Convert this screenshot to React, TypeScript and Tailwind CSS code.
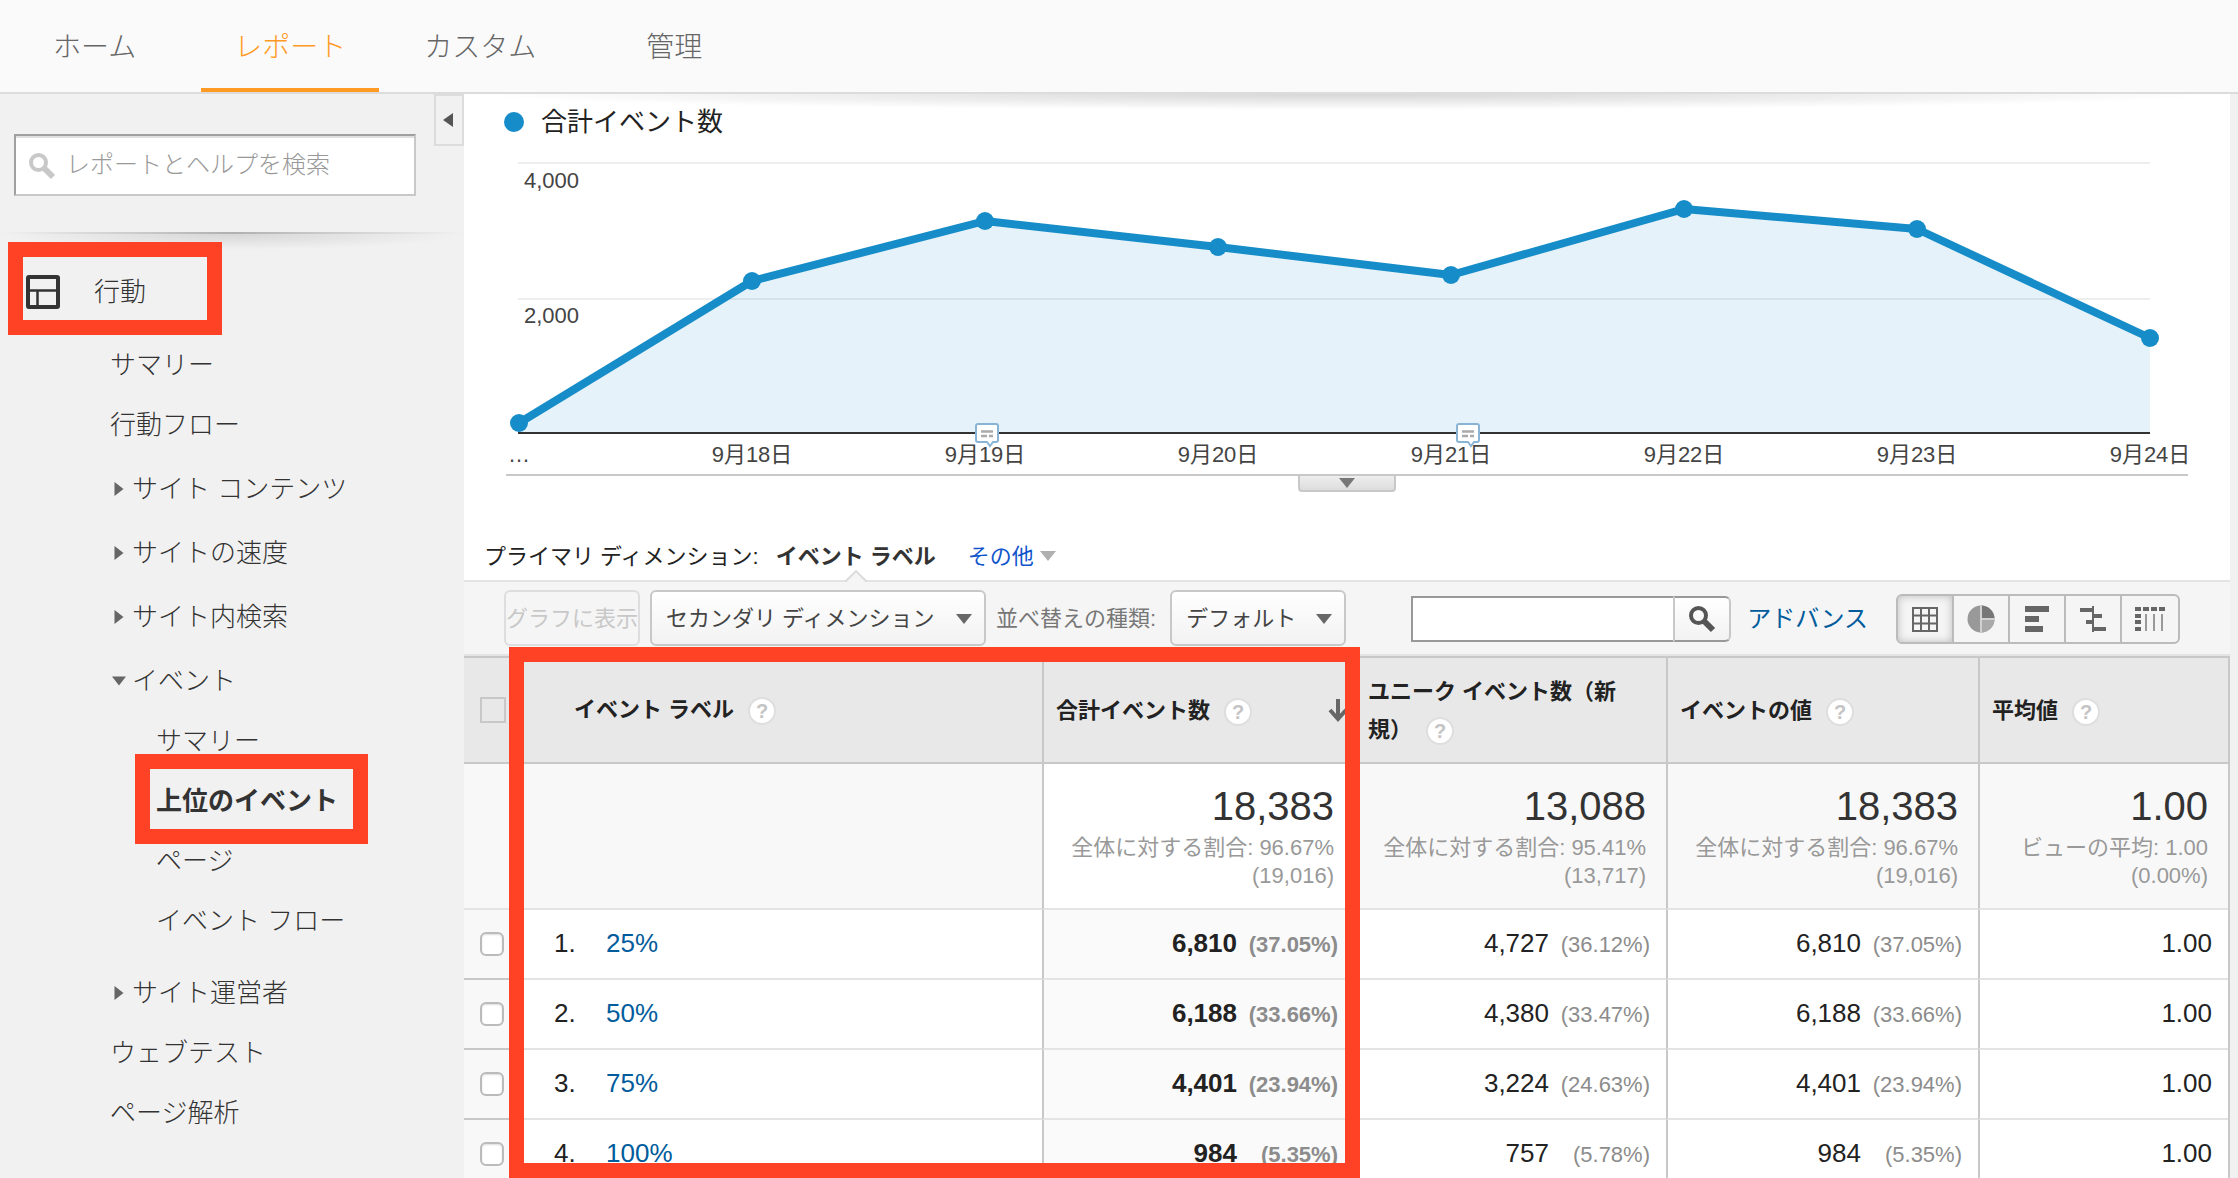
import { useState } from "react";
import clsx from "clsx";

type MenuEntry = {
  label: string;
  kind: "leaf" | "group";
  open?: boolean;
  children?: { label: string; active?: boolean }[];
};

type Metric = { value: string; percent?: string };

const tabs = [
  { label: "ホーム", className: "ml-5" },
  { label: "レポート", className: "ml-8", active: true },
  { label: "カスタム", className: "ml-3" },
  { label: "管理", className: "ml-11" },
];

const menu: MenuEntry[] = [
  { label: "サマリー", kind: "leaf" },
  { label: "行動フロー", kind: "leaf" },
  { label: "サイト コンテンツ", kind: "group" },
  { label: "サイトの速度", kind: "group" },
  { label: "サイト内検索", kind: "group" },
  {
    label: "イベント",
    kind: "group",
    open: true,
    children: [
      { label: "サマリー" },
      { label: "上位のイベント", active: true },
      { label: "ページ" },
      { label: "イベント フロー" },
    ],
  },
  { label: "サイト運営者", kind: "group" },
  { label: "ウェブテスト", kind: "leaf" },
  { label: "ページ解析", kind: "leaf" },
];

const points = [
  { x: 55, y: 273, label: "…" },
  { x: 288, y: 131, label: "9月18日" },
  { x: 521, y: 71, label: "9月19日" },
  { x: 754, y: 97, label: "9月20日" },
  { x: 987, y: 125, label: "9月21日" },
  { x: 1220, y: 59, label: "9月22日" },
  { x: 1453, y: 79, label: "9月23日" },
  { x: 1686, y: 188, label: "9月24日" },
];

const columns = [
  { label: "合計イベント数", sorted: true },
  { label: "ユニーク イベント数（新規）" },
  { label: "イベントの値" },
  { label: "平均値" },
];

const totals = [
  { value: "18,383", note: "全体に対する割合: 96.67%", base: "(19,016)" },
  { value: "13,088", note: "全体に対する割合: 95.41%", base: "(13,717)" },
  { value: "18,383", note: "全体に対する割合: 96.67%", base: "(19,016)" },
  { value: "1.00", note: "ビューの平均: 1.00", base: "(0.00%)" },
];

const rows: { label: string; metrics: Metric[] }[] = [
  {
    label: "25%",
    metrics: [
      { value: "6,810", percent: "(37.05%)" },
      { value: "4,727", percent: "(36.12%)" },
      { value: "6,810", percent: "(37.05%)" },
      { value: "1.00" },
    ],
  },
  {
    label: "50%",
    metrics: [
      { value: "6,188", percent: "(33.66%)" },
      { value: "4,380", percent: "(33.47%)" },
      { value: "6,188", percent: "(33.66%)" },
      { value: "1.00" },
    ],
  },
  {
    label: "75%",
    metrics: [
      { value: "4,401", percent: "(23.94%)" },
      { value: "3,224", percent: "(24.63%)" },
      { value: "4,401", percent: "(23.94%)" },
      { value: "1.00" },
    ],
  },
  {
    label: "100%",
    metrics: [
      { value: "984", percent: "(5.35%)" },
      { value: "757", percent: "(5.78%)" },
      { value: "984", percent: "(5.35%)" },
      { value: "1.00" },
    ],
  },
];

const Triangle = ({ className }: { className?: string }) => (
  <svg viewBox="0 0 16 10" className={clsx("w-4 h-2.5 fill-current", className)} aria-hidden="true">
    <path d="M0 0h16L8 10z" />
  </svg>
);

const Magnifier = ({ className }: { className?: string }) => (
  <svg viewBox="0 0 28 28" className={clsx("w-7 h-7", className)} fill="none" stroke="currentColor" aria-hidden="true">
    <circle cx="10.5" cy="10.5" r="7.5" strokeWidth={4} />
    <path d="M16 16l9 9" strokeWidth={6} />
  </svg>
);

const HelpIcon = ({ className }: { className?: string }) => (
  <span
    className={clsx(
      "inline-flex items-center justify-center w-7 h-7 rounded-full bg-white border-2 border-[#dedede] text-[20px] leading-none font-bold text-[#c4c4c4] align-middle",
      className,
    )}
  >
    ?
  </span>
);

const Header = () => (
  <header className="bg-[#fafafa] border-b-2 border-[#dcdcdc]">
    <nav className="flex h-[92px]">
      {tabs.map((tab) => (
        <a
          key={tab.label}
          href="#"
          className={clsx(
            "flex items-center px-[33px] pt-2 border-b-4 text-[28px] font-light",
            tab.active ? "border-[#ff9a25] text-[#ff9a25]" : "border-transparent text-[#666]",
            tab.className,
          )}
        >
          {tab.label}
        </a>
      ))}
    </nav>
  </header>
);

const Sidebar = () => (
  <aside className="w-[464px] shrink-0 text-[26px] font-light text-[#333]">
    <div className="flex items-start justify-between h-[138px]">
      <label className="relative mt-10 ml-3.5 block">
        <Magnifier className="absolute left-3.5 top-[18px] text-[#c8c8c8]" />
        <input
          type="text"
          aria-label="レポートとヘルプを検索"
          placeholder="レポートとヘルプを検索"
          className="w-[402px] h-[62px] pl-[50px] bg-white border-2 border-t-[#a0a0a0] border-l-[#a0a0a0] border-r-[#c8c8c8] border-b-[#c8c8c8] text-[24px] placeholder:text-[#999] shadow-[inset_0_2px_0_#e0e0e0]"
        />
      </label>
      <button
        aria-label="メニューを閉じる"
        className="flex items-center justify-center w-[30px] h-[52px] pr-0.5 border-2 border-[#dcdcdc] text-[#555]"
      >
        <svg viewBox="0 0 10 14" className="w-2.5 h-3.5 fill-current" aria-hidden="true">
          <path d="M10 0v14L0 7z" />
        </svg>
      </button>
    </div>
    <div className="h-0.5 bg-[linear-gradient(to_right,#f1f1f1,#b0b0b0_50%,#f1f1f1)]" />
    <div className="h-4 bg-[radial-gradient(ellipse_at_top,rgba(0,0,0,0.11),transparent_70%)]" />

    <a href="#" className="relative flex items-center h-[84px] pl-[26px]">
      <span className="absolute left-2 -top-2 w-[214px] h-[93px] border-[15px] border-[#ff4126]" />
      <svg viewBox="0 0 34 34" className="w-[34px] h-[34px]" fill="none" stroke="#333" aria-hidden="true">
        <rect x="2" y="2" width="30" height="30" rx="1" strokeWidth={4} />
        <path d="M3 15.500h28M11.500 16v15" strokeWidth={2.500} />
      </svg>
      <span className="ml-[34px]">行動</span>
    </a>

    <ul className="pt-px">
      {menu.map((entry) => (
        <li key={entry.label}>
          <a
            href="#"
            className={clsx(
              "flex items-center pl-[110px]",
              entry.kind === "group" ? "h-16 pt-1" : "h-[60px]",
            )}
          >
            {entry.kind === "group" && (
              <span className="flex justify-center w-[22px] pr-1 text-[#666]">
                {entry.open ? (
                  <svg viewBox="0 0 14 9" className="w-3.5 h-2.5 fill-current" aria-hidden="true">
                    <path d="M0 0h14L7 9z" />
                  </svg>
                ) : (
                  <svg viewBox="0 0 9 14" className="w-2.5 h-3.5 fill-current" aria-hidden="true">
                    <path d="M0 0v14l9-7z" />
                  </svg>
                )}
              </span>
            )}
            {entry.label}
          </a>
          {entry.children && (
            <ul className="pb-2">
              {entry.children.map((child) => (
                <li key={child.label} className="relative">
                  <a
                    href="#"
                    className={clsx(
                      "flex items-center h-[60px] pl-[156px]",
                      child.active && "font-bold",
                    )}
                  >
                    {child.label}
                  </a>
                  {child.active && (
                    <span className="absolute left-[135px] -top-[17px] w-[233px] h-[90px] border-[15px] border-[#ff4126]" />
                  )}
                </li>
              ))}
            </ul>
          )}
        </li>
      ))}
    </ul>
  </aside>
);

const Note = ({ x, y }: { x: number; y: number }) => (
  <g transform={`translate(${x} ${y})`}>
    <path
      d="M3 1h18q2 0 2 2v14q0 2-2 2h-3l-3 4-3-4H3q-2 0-2-2V3q0-2 2-2z"
      fill="#fff"
      stroke="#8ab4d6"
      strokeWidth={2}
    />
    <path d="M6 8.500h12M6 13h6M14 13h4" stroke="#aaa" strokeWidth={2.500} />
  </g>
);

const Chart = () => {
  const line = points.map((p) => `${p.x},${p.y}`).join(" ");

  return (
    <svg viewBox="0 0 1766 324" className="block w-full h-auto" role="img" aria-label="合計イベント数">
      <g stroke="#eee" strokeWidth={2}>
        <path d="M54 13h1632M54 149h1632" />
      </g>
      <polygon points={`55,283 ${line} 1686,283`} fill="#168dc8" fillOpacity={0.11} />
      <path d="M54 283h1632" stroke="#333" strokeWidth={2} />
      <polyline points={line} fill="none" stroke="#168dc8" strokeWidth={8} strokeLinejoin="round" />
      {points.map((p) => (
        <circle key={p.x} cx={p.x} cy={p.y} r={9} fill="#168dc8" />
      ))}
      <g fill="#444" fontSize={22}>
        <text x={60} y={38}>
          4,000
        </text>
        <text x={60} y={173}>
          2,000
        </text>
        {points.map((p) => (
          <text key={p.x} x={p.x} y={312} textAnchor="middle">
            {p.label}
          </text>
        ))}
      </g>
      <Note x={511} y={273} />
      <Note x={992} y={273} />
    </svg>
  );
};

const viewIcons = [
  {
    label: "データ",
    icon: (
      <path d="M2 3h24v23H2zM2 10.500h24M2 18.500h24M10 3v23M18 3v23" fill="none" stroke="#666" strokeWidth={2} />
    ),
  },
  {
    label: "割合",
    icon: (
      <>
        <circle cx="14" cy="14" r="13.500" fill="#999" />
        <path d="M15 .5A13.500 13.500 0 0 1 27.500 13H15z" fill="#777" />
        <path d="M15 15h12.500A13.500 13.500 0 0 1 15 27.500z" fill="#aaa" />
        <path d="M14 1v26M14 14h13" stroke="#e4e4e4" strokeWidth={1.500} />
      </>
    ),
  },
  {
    label: "サマリー",
    icon: <path d="M2 4h24M2 14h14M2 24h18" stroke="#666" strokeWidth={6} />,
  },
  {
    label: "比較",
    icon: (
      <>
        <path d="M1 5h12M14 11h9M7 17h7M14 24h13" stroke="#666" strokeWidth={4} />
        <path d="M14 1v26" stroke="#666" strokeWidth={2} />
      </>
    ),
  },
  {
    label: "ピボット",
    icon: (
      <>
        <path d="M-1 4h6M7 4h6M15 4h6M23 4h6M-1 11h6M-1 17h6M-1 24h6" stroke="#666" strokeWidth={4} />
        <path d="M10 9v17M18 9v17M26 9v17" stroke="#999" strokeWidth={2} />
      </>
    ),
  },
];

const Toolbar = () => {
  const [view, setView] = useState("データ");

  return (
    <div className="flex items-center h-[76px] pl-10 pr-[50px] bg-[#f5f5f5] border-y-2 border-[#e4e4e4] text-[22px]">
      <button
        disabled
        className="w-[136px] h-14 border-2 border-[#dedede] rounded-md text-[#c8c8c8] whitespace-nowrap"
      >
        グラフに表示
      </button>
      <div className="relative ml-2.5">
        <select
          aria-label="セカンダリ ディメンション"
          className="w-[336px] h-14 pl-3.5 appearance-none border-2 border-[#c8c8c8] rounded-md bg-linear-to-b from-white to-[#f2f2f2] text-[#444]"
        >
          <option>セカンダリ ディメンション</option>
        </select>
        <Triangle className="absolute right-3.5 top-6 text-[#666] pointer-events-none" />
      </div>
      <label htmlFor="sort-type" className="ml-2.5 text-[#777] whitespace-nowrap">
        並べ替えの種類:
      </label>
      <div className="relative ml-3.5">
        <select
          id="sort-type"
          className="w-44 h-14 pl-3.5 appearance-none border-2 border-[#c8c8c8] rounded-md bg-linear-to-b from-white to-[#f2f2f2] text-[#444]"
        >
          <option>デフォルト</option>
        </select>
        <Triangle className="absolute right-3.5 top-6 text-[#666] pointer-events-none" />
      </div>

      <div className="flex items-center pt-0.5 ml-auto">
        <input
          type="text"
          aria-label="検索"
          className="w-[262px] h-[46px] px-3 bg-white border-2 border-r-0 border-[#999]"
        />
        <button
          aria-label="検索する"
          className="flex items-center justify-center w-[58px] h-[46px] border-2 border-[#999] border-l-[#c8c8c8] border-r-[#c8c8c8] rounded-r-md bg-linear-to-b from-white to-[#f2f2f2] text-[#555]"
        >
          <Magnifier />
        </button>
        <a href="#" className="ml-4 text-[24px] text-[#005c9c] whitespace-nowrap">
          アドバンス
        </a>
        <div className="flex ml-7 border-2 border-[#bbb] rounded-md overflow-hidden divide-x-2 divide-[#bbb]">
          {viewIcons.map(({ label, icon }) => (
            <button
              key={label}
              aria-label={label}
              aria-pressed={view === label}
              onClick={() => setView(label)}
              className={clsx(
                "flex items-center justify-center w-14 h-[46px]",
                view === label && "shadow-[inset_0_0_8px_#bbb]",
              )}
            >
              <svg viewBox="0 0 28 28" className="w-7 h-7 overflow-visible" aria-hidden="true">
                {icon}
              </svg>
            </button>
          ))}
        </div>
      </div>
    </div>
  );
};

const EventTable = () => (
  <table className="w-full table-fixed border-separate border-spacing-0 border-r-2 border-[#c8c8c8]">
    <colgroup>
      <col className="w-[50px]" />
      <col />
      <col className="w-[312px]" />
      <col className="w-[312px]" />
      <col className="w-[312px]" />
      <col className="w-[250px]" />
    </colgroup>
    <thead>
      <tr className="h-[108px] bg-[#e8e8e8] text-[22px] leading-[38px] text-left text-[#222]">
        <th className="pl-4 border-y-2 border-[#c8c8c8]">
          <input
            type="checkbox"
            aria-label="すべて選択"
            className="block w-[26px] h-[26px] appearance-none border-2 border-[#c8c8c8]"
          />
        </th>
        <th className="pl-[60px] border-y-2 border-[#c8c8c8]">
          イベント ラベル
          <HelpIcon className="ml-3.5" />
        </th>
        {columns.map((column) => (
          <th key={column.label} className="pt-0.5 pl-3 border-y-2 border-l-2 border-[#c8c8c8]">
            <div className="flex items-center">
              <div className="max-w-[270px]">
                {column.label}
                <HelpIcon className="ml-3.5" />
              </div>
              {column.sorted && (
                <svg viewBox="0 0 20 24" className="w-5 h-6 ml-auto mr-1.5" fill="none" stroke="#666" aria-hidden="true">
                  <path d="M10 0v20M2 11l8 9 8-9" strokeWidth={4} />
                </svg>
              )}
            </div>
          </th>
        ))}
      </tr>
    </thead>
    <tbody>
      <tr className="h-[146px] align-top bg-[#f8f8f8]">
        <td className="border-b-2 border-[#e4e4e4]" />
        <td className="border-b-2 border-[#e4e4e4]" />
        {totals.map((total, i) => (
          <td
            key={i}
            className={clsx(
              "pt-5 pr-5 border-b-2 border-l-2 border-b-[#e4e4e4] border-l-[#c8c8c8] text-right text-[22px] leading-7 text-[#999] whitespace-nowrap",
              i === 0 && "bg-white",
            )}
          >
            <div className="mb-1.5 text-[40px] leading-[44px] text-[#333]">{total.value}</div>
            <div>{total.note}</div>
            <div>{total.base}</div>
          </td>
        ))}
      </tr>
      {rows.map((row, index) => (
        <tr key={row.label} className="h-[70px] bg-white text-[26px] text-[#222]">
          <td className="pl-4 bg-[#f8f8f8] border-b-2 border-[#c8c8c8]">
            <input
              type="checkbox"
              aria-label={row.label}
              className="block w-6 h-6 appearance-none bg-white border-2 border-[#bbb] rounded-md shadow-[inset_0_1px_2px_#ddd]"
            />
          </td>
          <td className="pl-10 pb-0.5 border-b-2 border-[#e4e4e4]">
            <span className="inline-block w-[52px]">{index + 1}.</span>
            <a href="#" className="text-[#005c9c]">
              {row.label}
            </a>
          </td>
          {row.metrics.map((metric, i) => (
            <td
              key={i}
              className={clsx(
                "pr-4 pb-0.5 border-b-2 border-l-2 border-b-[#e4e4e4] border-l-[#c8c8c8] text-right",
                i === 0 && "bg-[#fafafa] font-bold",
              )}
            >
              {metric.value}
              {metric.percent && (
                <span className="inline-block w-[101px] text-[22px] text-[#8c8c8c]">{metric.percent}</span>
              )}
            </td>
          ))}
        </tr>
      ))}
    </tbody>
  </table>
);

const App = () => (
  <div className="flex flex-col h-screen overflow-hidden bg-[#f1f1f1] font-['Liberation_Sans','Noto_Sans_CJK_JP',sans-serif]">
    <Header />
    <div className="flex flex-1 min-h-0">
      <Sidebar />
      <main className="relative flex flex-col flex-1 min-w-0 mr-2 bg-white">
        <div className="absolute inset-x-0 top-0 h-4 bg-[radial-gradient(ellipse_at_top,rgba(0,0,0,0.16),transparent_70%)]" />
        <div className="flex items-center h-14 pl-10 text-[26px] text-[#222]">
          <span className="w-5 h-5 mr-[17px] rounded-full bg-[#168dc8]" />
          合計イベント数
        </div>
        <Chart />
        <div className="flex justify-center mx-[42px] border-t-2 border-[#c8c8c8]">
          <button
            aria-label="グラフを開く"
            className="flex items-center justify-center w-[98px] h-4 border-x-2 border-b-2 border-[#c8c8c8] rounded-b-sm bg-linear-to-b from-[#eee] to-[#ddd] text-[#777]"
          >
            <Triangle />
          </button>
        </div>

        <div className="flex items-center h-12 mt-10 pl-5 text-[22px] text-[#222]">
          プライマリ ディメンション:
          <div className="relative flex items-center h-full ml-[17px] font-bold text-[#333]">
            イベント ラベル
            <svg viewBox="0 0 24 12" className="absolute left-[68px] -bottom-0.5 w-6 h-3" aria-hidden="true">
              <path d="M1 12L12 1l11 11" fill="#f5f5f5" stroke="#dcdcdc" strokeWidth={2} />
            </svg>
          </div>
          <a href="#" className="flex items-center ml-8 text-[#1155cc]">
            その他
            <Triangle className="ml-1.5 text-[#b0b0b0]" />
          </a>
        </div>
        <Toolbar />
        <section className="relative flex-1 min-h-0">
          <EventTable />
          <div className="absolute left-[45px] -top-[9px] bottom-0 right-[870px] border-[15px] border-[#ff4126] pointer-events-none" />
        </section>
      </main>
    </div>
  </div>
);

export default App;
